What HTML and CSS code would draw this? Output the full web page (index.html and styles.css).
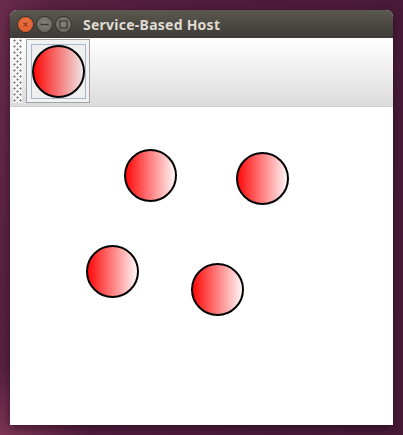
FILE: index.html
```html
<!DOCTYPE html>
<html>
<head>
<meta charset="utf-8">
<title>Service-Based Host</title>
<link rel="stylesheet" href="styles.css">
</head>
<body>
<div class="window">
  <header class="titlebar">
    <div class="controls">
      <span class="btn btn-close"><svg width="9" height="9" viewBox="0 0 9 9"><path d="M2.5 2.5l4 4M6.5 2.5l-4 4" stroke="#8a3c18" stroke-width="1.2" fill="none"/></svg></span>
      <span class="btn"><svg width="9" height="9" viewBox="0 0 9 9"><path d="M0.5 4.5h8" stroke="#3a3934" stroke-width="1.4" fill="none"/></svg></span>
      <span class="btn"><svg width="9" height="9" viewBox="0 0 9 9"><rect x="1" y="1" width="7" height="7" stroke="#3a3934" stroke-width="1.2" fill="none"/></svg></span>
    </div>
    <span class="title">Service-Based Host</span>
  </header>
  <div class="toolbar">
    <div class="grip"></div>
    <div class="tool-outer">
      <div class="tool-inner">
        <span class="ball ball-tool"></span>
      </div>
    </div>
  </div>
  <main class="canvas">
    <span class="ball ball-a"></span>
    <span class="ball ball-b"></span>
    <span class="ball ball-c"></span>
    <span class="ball ball-d"></span>
  </main>
</div>
</body>
</html>
```

FILE: styles.css
```css
* { box-sizing: border-box; }
html, body { margin: 0; height: 100%; }
body {
  width: 403px;
  height: 435px;
  overflow: hidden;
  padding: 10px;
  background:
    radial-gradient(ellipse 90px 70px at 0px 435px, #7c3453 0%, rgba(124,52,83,0) 100%),
    linear-gradient(100deg, #6a2c4a 0%, #57203f 12%, #4f1c3c 45%, #471a36 100%);
}
.window {
  width: 383px;
  height: 415px;
  display: flex;
  flex-direction: column;
  background: #fff;
  border-radius: 7px 7px 0 0;
  overflow: hidden;
  box-shadow: 0 3px 8px rgba(20,5,15,0.5);
}
.titlebar {
  flex: 0 0 28px;
  display: flex;
  align-items: center;
  background: linear-gradient(#5b5850, #3d3b35);
  padding: 1px 0 0 8px;
}
.controls { display: flex; gap: 4px; width: 65px; }
.btn {
  width: 15px;
  height: 15px;
  border-radius: 50%;
  display: flex;
  align-items: center;
  justify-content: center;
  background: radial-gradient(circle at 50% 40%, #85837b, #605e57);
  box-shadow: 0 0 0 1px #35332e;
}
.btn-close { background: radial-gradient(circle at 50% 40%, #f0764a, #d8501f); }
.title {
  font: bold 14px "Noto Sans", "DejaVu Sans", sans-serif;
  letter-spacing: 0.25px;
  color: #dfdbd2;
}
.toolbar {
  flex: 0 0 69px;
  display: flex;
  align-items: flex-start;
  padding: 1px 0 0 3px;
  background: linear-gradient(#ffffff, #dcdcdc);
  border-bottom: 1px solid #cfcfcf;
}
.grip {
  width: 9px;
  height: 64px;
  background-color: #f6f6f6;
  background-image:
    radial-gradient(circle at 1.5px 1.5px, #777 0.8px, transparent 1.3px),
    radial-gradient(circle at 4.5px 4.5px, #777 0.8px, transparent 1.3px);
  background-size: 6px 6px;
}
.tool-outer {
  margin-left: 4px;
  width: 64px;
  height: 64px;
  padding: 4px;
  border: 1px solid #a3a3a3;
  background: #f2f2f2;
}
.tool-inner {
  width: 55px;
  height: 55px;
  border: 1px solid #a6b8cd;
  background: #efefef;
  display: flex;
  align-items: center;
  justify-content: center;
}
.canvas { flex: 1; position: relative; background: #fff; }
.ball {
  display: block;
  width: 53px;
  height: 53px;
  flex: none;
  border-radius: 50%;
  border: 2px solid #000;
  background: linear-gradient(90deg, #ff0000, #ffffff);
  background-origin: border-box;
}
.ball-tool { background: linear-gradient(90deg, #ff0000, #eeeeee); background-origin: border-box; }
.canvas .ball { position: absolute; }
.ball-a { left: 114px; top: 42px; }
.ball-b { left: 226px; top: 45px; }
.ball-c { left: 76px; top: 138px; }
.ball-d { left: 181px; top: 156px; }
```
